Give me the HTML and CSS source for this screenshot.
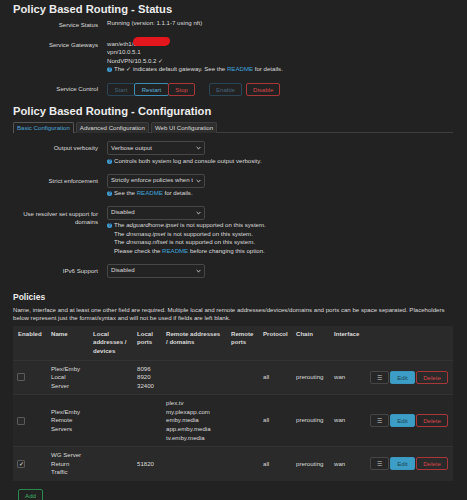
FILE: index.html
```html
<!DOCTYPE html>
<html lang="en">

<head>
    <meta charset="UTF-8">
    <meta name="viewport" content="width=device-width, initial-scale=1.0">
    <title>Policy Based Routing</title>
    <link rel="stylesheet" href="styles.css">
</head>

<body>
    <h2 class="title">Policy Based Routing - Status</h2>
    <div class="row status-first">
        <div class="label">Service Status</div>
        <div class="value">Running (version: 1.1.1-7 using nft)</div>
    </div>
    <div class="row status-row">
        <div class="label">Service Gateways</div>
        <div class="value">
            <div>wan/eth1/8<span class="redact"></span></div>
            <div>vpn/10.0.5.1</div>
            <div>NordVPN/10.5.0.2 &#10003;</div>
            <div class="help"><span class="qmark">?</span><span>The &#10003; indicates default gateway. See the <a href="#">README</a> for details.</span></div>
        </div>
    </div>
    <div class="row control-row">
        <div class="label">Service Control</div>
        <div class="value buttons">
            <span class="btn btn-dim">Start</span>
            <span class="btn btn-blue">Restart</span>
            <span class="btn btn-red">Stop</span>
            <span class="btn btn-dim spaced">Enable</span>
            <span class="btn btn-red gap">Disable</span>
        </div>
    </div>

    <h2 class="title config-title">Policy Based Routing - Configuration</h2>
    <div class="tabs">
        <span class="tab active">Basic Configuration</span>
        <span class="tab">Advanced Configuration</span>
        <span class="tab">Web UI Configuration</span>
    </div>

    <div class="row field first-field">
        <div class="label">Output verbosity</div>
        <div class="value">
            <div class="select"><span>Verbose output</span>
                <svg width="5" height="4" viewBox="0 0 5 4"><path d="M0.6 1 L2.5 2.9 L4.4 1" fill="none" stroke="#ddd" stroke-width="0.9"/></svg>
            </div>
            <div class="help"><span class="qmark">?</span><span>Controls both system log and console output verbosity.</span></div>
        </div>
    </div>
    <div class="row field">
        <div class="label">Strict enforcement</div>
        <div class="value">
            <div class="select"><span>Strictly enforce policies when the interface is down</span>
                <svg width="5" height="4" viewBox="0 0 5 4"><path d="M0.6 1 L2.5 2.9 L4.4 1" fill="none" stroke="#ddd" stroke-width="0.9"/></svg>
            </div>
            <div class="help"><span class="qmark">?</span><span>See the <a href="#">README</a> for details.</span></div>
        </div>
    </div>
    <div class="row field">
        <div class="label two-line">Use resolver set support for domains</div>
        <div class="value">
            <div class="select"><span>Disabled</span>
                <svg width="5" height="4" viewBox="0 0 5 4"><path d="M0.6 1 L2.5 2.9 L4.4 1" fill="none" stroke="#ddd" stroke-width="0.9"/></svg>
            </div>
            <div class="help"><span class="qmark">?</span>
                <span>The <i>adguardhome.ipset</i> is not supported on this system.<br>
                    The <i>dnsmasq.ipset</i> is not supported on this system.<br>
                    The <i>dnsmasq.nftset</i> is not supported on this system.<br>
                    Please check the <a href="#">README</a> before changing this option.</span>
            </div>
        </div>
    </div>
    <div class="row field">
        <div class="label">IPv6 Support</div>
        <div class="value">
            <div class="select"><span>Disabled</span>
                <svg width="5" height="4" viewBox="0 0 5 4"><path d="M0.6 1 L2.5 2.9 L4.4 1" fill="none" stroke="#ddd" stroke-width="0.9"/></svg>
            </div>
        </div>
    </div>

    <h3 class="policies-title">Policies</h3>
    <p class="policies-desc">Name, interface and at least one other field are required. Multiple local and remote addresses/devices/domains and ports can be space separated. Placeholders below represent just the format/syntax and will not be used if fields are left blank.</p>

    <table class="policies">
        <colgroup>
            <col style="width: 33px">
            <col style="width: 42px">
            <col style="width: 44px">
            <col style="width: 29px">
            <col style="width: 65px">
            <col style="width: 32px">
            <col style="width: 33px">
            <col style="width: 38px">
            <col style="width: 36px">
            <col style="width: 88px">
        </colgroup>
        <thead>
            <tr>
                <th>Enabled</th>
                <th>Name</th>
                <th>Local addresses / devices</th>
                <th>Local ports</th>
                <th>Remote addresses / domains</th>
                <th>Remote ports</th>
                <th>Protocol</th>
                <th>Chain</th>
                <th>Interface</th>
                <th></th>
            </tr>
        </thead>
        <tbody>
            <tr>
                <td><span class="check"></span></td>
                <td>Plex/Emby Local Server</td>
                <td></td>
                <td>8096 8920 32400</td>
                <td></td>
                <td></td>
                <td>all</td>
                <td>prerouting</td>
                <td>wan</td>
                <td class="actions"><span class="btn btn-menu">&#9776;</span><span class="btn btn-edit">Edit</span><span class="btn btn-red">Delete</span></td>
            </tr>
            <tr class="alt">
                <td><span class="check"></span></td>
                <td>Plex/Emby Remote Servers</td>
                <td></td>
                <td></td>
                <td>plex.tv my.plexapp.com emby.media app.emby.media tv.emby.media</td>
                <td></td>
                <td>all</td>
                <td>prerouting</td>
                <td>wan</td>
                <td class="actions"><span class="btn btn-menu">&#9776;</span><span class="btn btn-edit">Edit</span><span class="btn btn-red">Delete</span></td>
            </tr>
            <tr>
                <td><span class="check checked">&#10003;</span></td>
                <td>WG Server Return Traffic</td>
                <td></td>
                <td>51820</td>
                <td></td>
                <td></td>
                <td>all</td>
                <td>prerouting</td>
                <td>wan</td>
                <td class="actions"><span class="btn btn-menu">&#9776;</span><span class="btn btn-edit">Edit</span><span class="btn btn-red">Delete</span></td>
            </tr>
        </tbody>
    </table>

    <div class="add-row">
        <span class="btn btn-green">Add</span>
    </div>
</body>

</html>
```

FILE: styles.css
```css
body {
    font-family: "Liberation Sans", Arial, sans-serif;
    font-size: 6.1px;
    line-height: 8.6px;
    margin: 0;
    padding: 0 14px 0 13px;
    background-color: #222;
    color: #dcdcdc;
    overflow: hidden;
}

a {
    color: #3fa3dc;
    text-decoration: none;
}

.title {
    font-size: 11.2px;
    line-height: 14px;
    font-weight: bold;
    color: #ececec;
    margin: 2px 0 0;
}

.config-title {
    margin-top: 8.5px;
}

.row {
    display: flex;
    gap: 9px;
}

.label {
    width: 85px;
    flex-shrink: 0;
    text-align: right;
    padding-top: 1.5px;
}

.value {
    flex: 1;
}

.status-first {
    margin-top: 3px;
}

.status-row {
    margin-top: 10.5px;
}

.control-row {
    margin-top: 9px;
    align-items: center;
}

.control-row .label {
    padding-top: 0;
}

.redact {
    display: inline-block;
    width: 37px;
    height: 9px;
    margin-left: -4px;
    margin-top: -4px;
    vertical-align: middle;
    border-radius: 5px 4px 5px 4px;
    background: #e3161c;
}

.help {
    display: flex;
    gap: 2px;
}

.qmark {
    display: inline-block;
    width: 5px;
    height: 5px;
    margin-top: 1.8px;
    border-radius: 50%;
    background: #3fa3dc;
    color: #1b2a33;
    font-size: 4.5px;
    line-height: 5px;
    font-weight: bold;
    text-align: center;
    flex-shrink: 0;
}

.btn {
    display: inline-block;
    box-sizing: border-box;
    height: 13px;
    line-height: 11px;
    padding: 0 6px;
    border: 1px solid #555;
    border-radius: 2px;
    text-align: center;
    background: transparent;
}

.buttons {
    display: flex;
}

.btn-dim {
    border-color: #2a4556;
    color: #45627a;
    width: 28px;
}

.btn-blue {
    border-color: #3b8db3;
    color: #5ab1da;
    width: 35px;
    margin-left: -1px;
}

.buttons .btn-red {
    width: 27px;
    margin-left: -1px;
}

.btn-red {
    border-color: #a9373a;
    color: #d9474a;
}

.buttons .spaced {
    margin-left: 14px;
    width: 33px;
}

.buttons .gap {
    margin-left: 4px;
    width: 34px;
}

.tabs {
    display: flex;
    gap: 2px;
    margin-top: 4px;
    border-bottom: 1px solid #3e3e3e;
    height: 10px;
}

.tab {
    box-sizing: border-box;
    height: 11px;
    line-height: 10px;
    padding: 0 3px;
    border: 1px solid #3e3e3e;
    border-bottom: none;
    border-radius: 2px 2px 0 0;
    background: #2e2e2e;
}

.tab.active {
    background: #222;
    border-color: #555;
    color: #4aa6da;
}

.first-field {
    margin-top: 9px;
}

.field {
    margin-top: 8px;
}

.field .label {
    padding-top: 3px;
}

.field .label.two-line {
    padding-top: 4px;
}

.select {
    box-sizing: border-box;
    width: 98px;
    height: 14px;
    border: 1px solid #474747;
    border-radius: 2px;
    background: #232323;
    display: flex;
    align-items: center;
    padding: 0 3px 0 3px;
    margin-bottom: 1.5px;
    gap: 3px;
}

.select span {
    flex: 1;
    white-space: nowrap;
    overflow: hidden;
}

.select svg {
    flex-shrink: 0;
}

.policies-title {
    font-size: 8.5px;
    line-height: 11px;
    font-weight: bold;
    color: #ececec;
    margin: 12.5px 0 0;
}

.policies-desc {
    margin: 3px 0 0;
}

.policies {
    width: 440px;
    table-layout: fixed;
    border-collapse: collapse;
    margin-top: 3px;
    background: #2a2a2a;
}

.policies th {
    text-align: left;
    font-weight: bold;
    vertical-align: top;
    padding: 4px 4px 4px 5px;
}

.policies td {
    vertical-align: middle;
    padding: 4px 5px;
    border-top: 1px solid #333;
}

.policies tr.alt td {
    background: #262626;
}

.check {
    display: inline-block;
    box-sizing: border-box;
    width: 8px;
    height: 8px;
    margin-left: -1px;
    border: 1px solid #5a5a5a;
    border-radius: 1px;
    background: #2a2a2a;
    vertical-align: middle;
    color: #eee;
    font-size: 6px;
    line-height: 6px;
    text-align: center;
}

.actions {
    white-space: nowrap;
    font-size: 0;
}

.actions .btn {
    font-size: 6.1px;
    padding: 0;
}

.btn-menu {
    width: 19px;
    border-color: #464646;
    background: #262626;
    color: #ccc;
}

.btn-edit {
    width: 25px;
    margin-left: 1px;
    border-color: #3b97bd;
    background: #3c9ec6;
    color: #1e4252;
}

.actions .btn-red {
    width: 32px;
    margin-left: 1px;
}

.add-row {
    margin-top: 8px;
    padding-left: 5px;
}

.btn-green {
    width: 25px;
    padding: 0;
    border-color: #2a8a4e;
    color: #3cb563;
}
```
